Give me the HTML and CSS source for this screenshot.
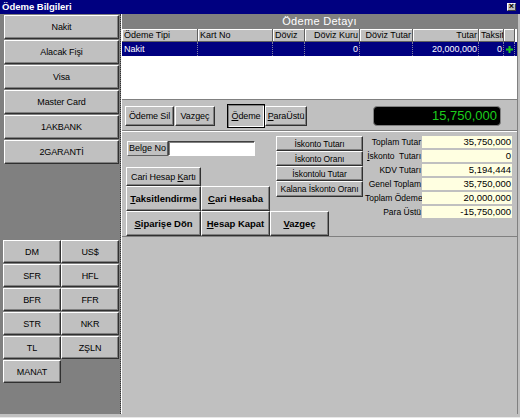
FILE: index.html
```html
<!DOCTYPE html>
<html lang="tr">
<head>
<meta charset="utf-8">
<title>Ödeme Bilgileri</title>
<link rel="stylesheet" href="styles.css">
</head>
<body>
<div class="window">
  <div class="titlebar">
    <span class="title">Ödeme Bilgileri</span>
    <span class="close">×</span>
  </div>
  <div class="main">
    <div class="left">
      <div class="methods">
        <div class="btn mbtn">Nakit</div>
        <div class="btn mbtn">Alacak Fişi</div>
        <div class="btn mbtn">Visa</div>
        <div class="btn mbtn">Master Card</div>
        <div class="btn mbtn">1AKBANK</div>
        <div class="btn mbtn">2GARANTİ</div>
      </div>
      <div class="currencies">
        <div class="btn">DM</div>
        <div class="btn">US$</div>
        <div class="btn">SFR</div>
        <div class="btn">HFL</div>
        <div class="btn">BFR</div>
        <div class="btn">FFR</div>
        <div class="btn">STR</div>
        <div class="btn">NKR</div>
        <div class="btn">TL</div>
        <div class="btn">ZŞLN</div>
        <div class="btn">MANAT</div>
      </div>
    </div>
    <div class="right">
      <div class="detail-header">Ödeme Detayı</div>
      <div class="grid">
        <div class="grow head">
          <div class="th c1">Ödeme Tipi</div>
          <div class="th c2">Kart No</div>
          <div class="th c3">Döviz</div>
          <div class="th c4 r">Döviz Kuru</div>
          <div class="th c5 r">Döviz Tutar</div>
          <div class="th c6 r">Tutar</div>
          <div class="th c7 r">Taksit</div>
          <div class="th c8"></div>
        </div>
        <div class="grow sel">
          <div class="td c1">Nakit</div>
          <div class="td c2"></div>
          <div class="td c3"></div>
          <div class="td c4 r">0</div>
          <div class="td c5 r"></div>
          <div class="td c6 r">20,000,000</div>
          <div class="td c7 r">0</div>
          <div class="td c8 ico"><svg width="7" height="7" viewBox="0 0 7 7"><path d="M2.5 0h2v2.5h2.5v2h-2.5v2.5h-2v-2.5h-2.5v-2h2.5z" fill="#1cc41c"/></svg></div>
        </div>
      </div>
      <div class="toolbar">
        <div class="btn tb w49">Ödeme Sil</div>
        <div class="btn tb w40">Vazgeç</div>
        <div class="btn tb pressed w38"><span><u>Ö</u>deme</span></div>
        <div class="btn tb w42"><span><u>P</u>araÜstü</span></div>
        <div class="display">15,750,000</div>
      </div>
      <div class="form">
        <div class="colA">
          <div class="upper">
            <div class="a1l">
              <div class="belge">
                <div class="belge-label">Belge No</div>
                <div class="belge-input"></div>
              </div>
              <div class="btn karti"><span>Cari Hesap <u>K</u>artı</span></div>
              <div class="brow">
                <div class="btn bold w75"><span><u>T</u>aksitlendirme</span></div>
                <div class="btn bold w69"><span><u>C</u>ari Hesaba</span></div>
              </div>
            </div>
            <div class="iskonto">
              <div class="btn ib">İskonto Tutarı</div>
              <div class="btn ib">İskonto Oranı</div>
              <div class="btn ib">İskontolu Tutar</div>
              <div class="btn ib last">Kalana İskonto Oranı</div>
            </div>
          </div>
          <div class="brow">
            <div class="btn bold w75"><span><u>S</u>iparişe Dön</span></div>
            <div class="btn bold w69"><span><u>H</u>esap Kapat</span></div>
            <div class="btn bold w59"><span><u>V</u>azgeç</span></div>
          </div>
        </div>
        <div class="totals">
          <div class="tl">Toplam Tutar</div><div class="tv">35,750,000</div>
          <div class="tl"><u>İ</u>skonto&nbsp; Tutarı</div><div class="tv">0</div>
          <div class="tl">KDV Tutarı</div><div class="tv">5,194,444</div>
          <div class="tl">Genel Toplam</div><div class="tv">35,750,000</div>
          <div class="tl">Toplam Ödeme</div><div class="tv">20,000,000</div>
          <div class="tl">Para Üstü</div><div class="tv">-15,750,000</div>
        </div>
      </div>
    </div>
  </div>
</div>
</body>
</html>
```
FILE: styles.css
```css
* { box-sizing: border-box; margin: 0; padding: 0; }

body {
  margin: 0;
  background: #c0c0c0;
  font-family: "Liberation Sans", Arial, sans-serif;
  font-size: 9px;
  color: #000;
}

.window {
  width: 520px;
  height: 418px;
  background: #c0c0c0;
  display: flex;
  flex-direction: column;
  padding-bottom: 3px;
  border-bottom: 1px solid #e8e8e8;
  overflow: hidden;
}

.titlebar {
  height: 14px;
  flex: none;
  background: #000080;
  color: #fff;
  font-weight: bold;
  font-size: 9.5px;
  display: flex;
  align-items: center;
  justify-content: space-between;
  padding: 0 4px 1px 2px;
}

.close {
  width: 9px;
  height: 8px;
  background: #c0c0c0;
  color: #000;
  border: 1px solid;
  border-color: #fff #404040 #404040 #fff;
  font-size: 9px;
  line-height: 5px;
  text-align: center;
  font-weight: bold;
}

.main {
  flex: 1;
  display: flex;
  min-height: 0;
  padding-right: 2px;
}

.left {
  width: 121px;
  flex: none;
  background: #808080;
  border-right: 1px dotted #303030;
  padding: 1px 0 0 3px;
  display: flex;
  flex-direction: column;
}

.btn {
  background: #c0c0c0;
  border: 1px solid;
  border-color: #fff #303030 #303030 #fff;
  box-shadow: inset -1px -1px #808080;
  display: flex;
  align-items: center;
  justify-content: center;
  white-space: nowrap;
  overflow: hidden;
  letter-spacing: -0.1px;
}

.methods {
  display: flex;
  flex-direction: column;
  gap: 1px;
  margin-left: 1px;
  width: 115px;
}

.mbtn { height: 24px; }

.currencies {
  margin-top: 76px;
  display: grid;
  grid-template-columns: 58px 58px;
  grid-auto-rows: 23px;
  row-gap: 1px;
}

.right {
  flex: 1;
  min-width: 0;
  border-left: 1px solid #fff;
  border-right: 1px solid #808080;
  display: flex;
  flex-direction: column;
}

.detail-header {
  height: 15px;
  flex: none;
  background: #808080;
  color: #fff;
  font-size: 11px;
  line-height: 15px;
  text-align: center;
  letter-spacing: 0.3px;
}

.grid {
  height: 71px;
  flex: none;
  background: #fff;
  border-bottom: 1px solid #808080;
}

.grow { display: flex; }
.grow.head { height: 13px; }
.grow.sel { height: 14px; background: #000080; color: #fff; }

.th, .td {
  flex: none;
  padding: 0 1px 0 2px;
  white-space: nowrap;
  overflow: hidden;
}

.th {
  background: #c0c0c0;
  border-right: 1px solid #606060;
  border-bottom: 1px solid #606060;
  box-shadow: inset 1px 1px #fff;
  line-height: 12px;
}

.td {
  border-right: 1px dotted #8080a0;
  line-height: 14px;
}

.r { text-align: right; }

.c1 { width: 76px; }
.c2 { width: 75px; }
.c3 { width: 32px; }
.c4 { width: 55px; }
.c5 { width: 53px; }
.c6 { width: 66px; }
.c7 { width: 25px; }
.c8 { width: 11px; }

.ico { display: flex; align-items: center; padding-left: 2px; }

.toolbar {
  height: 31px;
  flex: none;
  border-bottom: 1px solid #808080;
  display: flex;
  align-items: center;
  padding: 2px 0 0 3px;
}

.tb { height: 20px; }
.w49 { width: 49px; }
.w40 { width: 40px; margin-left: 1px; }
.w38 { width: 38px; margin-left: 12px; }
.w42 { width: 42px; }

.pressed {
  height: 24px;
  border: 1px solid #000;
  box-shadow: inset 1px 1px #808080, inset -1px -1px #fff;
}

.display {
  margin-left: 66px;
  width: 128px;
  height: 20px;
  background: #000;
  border: 1px solid #808080;
  border-radius: 4px;
  color: #1ccf1c;
  font-size: 13px;
  line-height: 18px;
  text-align: right;
  padding-right: 3px;
}

.form {
  flex: none;
  border-top: 1px solid #fff;
  border-bottom: 1px solid #808080;
  padding: 4px 0 0 4px;
  display: flex;
  align-items: flex-start;
}

.colA { width: 237px; flex: none; }

.upper { display: flex; }

.a1l { width: 150px; flex: none; }

.belge {
  display: flex;
  height: 15px;
  margin: 5px 0 0 1px;
}

.belge-label {
  width: 41px;
  border: 1px solid;
  border-color: #fff #606060 #606060 #fff;
  line-height: 13px;
  text-align: center;
}

.belge-input {
  width: 87px;
  background: #fff;
  border: 1px solid;
  border-color: #404040 #fff #fff #404040;
  box-shadow: inset 1px 1px #808080;
}

.karti {
  margin-top: 11px;
  width: 75px;
  height: 19px;
}

.brow { display: flex; height: 25px; }

.bold { font-weight: bold; font-size: 9.5px; letter-spacing: 0; }
.w75 { width: 75px; }
.w69 { width: 69px; }
.w59 { width: 59px; }

.iskonto {
  width: 87px;
  flex: none;
  display: flex;
  flex-direction: column;
}

.ib { height: 15px; font-size: 8.5px; }
.ib.last { height: 16px; }

.totals {
  margin-left: 2px;
  display: grid;
  grid-template-columns: 56px 90px;
  column-gap: 1px;
  grid-auto-rows: 12px;
  row-gap: 2px;
}

.tl {
  text-align: right;
  line-height: 12px;
  font-size: 8.5px;
  white-space: nowrap;
}

.tv {
  background: #ffffe1;
  text-align: right;
  line-height: 12px;
  padding-right: 1px;
  font-size: 9.5px;
}
```
